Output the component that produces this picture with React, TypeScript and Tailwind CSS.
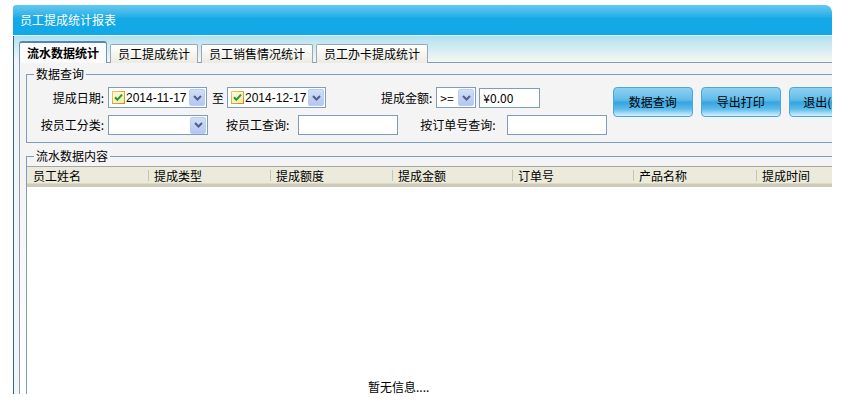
import type { ReactNode } from "react";

const FONT = "font-['SimSun','Noto_Sans_CJK_SC',sans-serif]";

export default function App() {
  return (
    <div
      className={`w-[848px] h-[415px] bg-white pl-[13px] pt-[5px] text-[12px] leading-[14px] text-black whitespace-nowrap ${FONT}`}
    >
      <div className="w-[819px] h-[389px] flex flex-col overflow-x-clip">
        <TitleBar />
        <div className="flex-1 flex flex-col border-l border-[#2d668c] bg-[#f4f4f4] bg-gradient-to-b from-[#b2e1f0] to-[#f6f7f4] bg-[length:100%_26px] bg-no-repeat pl-[5px] pt-[6px]">
          <TabStrip />
          <TabPanel />
        </div>
      </div>
    </div>
  );
}

const TitleBar = () => (
  <div className="h-[31px] shrink-0 flex items-center pl-[7px] rounded-tl-[3px] rounded-tr-[7px] bg-gradient-to-b from-[#62caf1] via-[#15aae6] via-[45%] to-[#12a8e6] border-b border-[#d8f1fa] text-white">
    员工提成统计报表
  </div>
);

const tabs = [
  { label: "流水数据统计", width: "w-[88px]", active: true },
  { label: "员工提成统计", width: "w-[88px]", active: false },
  { label: "员工销售情况统计", width: "w-[112px]", active: false },
  { label: "员工办卡提成统计", width: "w-[112px]", active: false },
];

const TabStrip = () => (
  <div className="h-[21px] shrink-0 flex items-end gap-[3px] relative z-10 -mb-px">
    {tabs.map((tab) =>
      tab.active ? (
        <div
          key={tab.label}
          className={`${tab.width} h-[22px] flex items-center justify-center font-bold rounded-t-[3px] border border-b-0 border-[#6f94b8] border-t-[2px] border-t-[#5187b5] bg-[#fbfbfb]`}
        >
          {tab.label}
        </div>
      ) : (
        <div
          key={tab.label}
          className={`${tab.width} h-[19px] flex items-center justify-center rounded-t-[2px] border border-b-0 border-[#9da7b3] bg-gradient-to-b from-white to-[#ecebe2]`}
        >
          {tab.label}
        </div>
      )
    )}
  </div>
);

const TabPanel = () => (
  <div className="flex-1 flex flex-col border-t border-l border-[#7f9db9] bg-gradient-to-b from-[#f4f4f4] from-[35%] to-white pl-[6px] pt-[4px]">
    <fieldset className="w-[820px] shrink-0 border border-[#7f9db9] pt-[6px] pb-[7px]">
      <legend className="ml-[7px] px-[2px]">数据查询</legend>
      <div className="flex items-start pl-[11px]">
        <div className="flex flex-col gap-[7px] shrink-0">
          <div className="flex items-center h-[21px]">
            <Label>提成日期:</Label>
            <DatePicker value="2014-11-17" className="ml-[4px]" />
            <span className="ml-[5px] shrink-0">至</span>
            <DatePicker value="2014-12-17" className="ml-[3px]" />
            <span className="ml-[55px] shrink-0">提成金额:</span>
            <Select value=">=" className="ml-[4px] w-[40px] h-[21px]" />
            <TextBox value="¥0.00" className="ml-[3px] w-[61px]" />
          </div>
          <div className="flex items-center h-[20px]">
            <Label>按员工分类:</Label>
            <Select value="" className="ml-[4px] w-[100px] h-[20px]" />
            <span className="ml-[18px] shrink-0">按员工查询:</span>
            <TextBox value="" className="ml-[9px] w-[100px]" />
            <span className="ml-[22px] shrink-0">按订单号查询:</span>
            <TextBox value="" className="ml-[11px] w-[100px]" />
          </div>
        </div>
        <div className="flex gap-[8px] ml-[6px] shrink-0">
          <BlueButton>数据查询</BlueButton>
          <BlueButton>导出打印</BlueButton>
          <BlueButton>退出(Esc)</BlueButton>
        </div>
      </div>
    </fieldset>

    <fieldset className="w-[820px] flex-1 flex flex-col border border-b-0 border-[#7f9db9] mt-[6px] pt-[3px]">
      <legend className="ml-[7px] px-[2px]">流水数据内容</legend>
      <GridHeader />
      <div className="flex-1 flex flex-col justify-end bg-white">
        <div className="ml-[341px]">暂无信息....</div>
      </div>
    </fieldset>
  </div>
);

const Label = ({ children }: { children: ReactNode }) => (
  <span className="w-[66px] text-right shrink-0">{children}</span>
);

const columns = [
  { label: "员工姓名", width: "w-[121px]" },
  { label: "提成类型", width: "w-[122px]" },
  { label: "提成额度", width: "w-[122px]" },
  { label: "提成金额", width: "w-[120px]" },
  { label: "订单号", width: "w-[121px]" },
  { label: "产品名称", width: "w-[123px]" },
  { label: "提成时间", width: "w-[121px]" },
];

const GridHeader = () => (
  <div className="h-[21px] shrink-0 flex border-t border-[#a6a6a6] border-b-[3px] border-b-[#cdcab9] bg-[#ebeadb] shadow-[inset_0_-1px_0_#dcd9cb]">
    {columns.map((col, i) => (
      <div key={col.label} className={`${col.width} flex items-center shrink-0`}>
        {i > 0 && <span className="w-px h-[11px] bg-[#c7c4b3] shrink-0" />}
        <span className={i === 0 ? "pl-[6px]" : "pl-[5px]"}>{col.label}</span>
      </div>
    ))}
  </div>
);

const CheckIcon = () => (
  <svg width="13" height="13" viewBox="0 0 13 13" className="shrink-0">
    <defs>
      <linearGradient id="cbBorder" x1="0" y1="0" x2="1" y2="1">
        <stop offset="0" stopColor="#f3c85a" />
        <stop offset="1" stopColor="#c98a1a" />
      </linearGradient>
      <linearGradient id="cbFill" x1="0" y1="0" x2="1" y2="1">
        <stop offset="0" stopColor="#fffbe6" />
        <stop offset="1" stopColor="#f5e7a8" />
      </linearGradient>
    </defs>
    <rect x="0.5" y="0.5" width="12" height="12" fill="url(#cbFill)" stroke="url(#cbBorder)" />
    <path d="M3 6.3 L5.3 8.8 L10 3.6" fill="none" stroke="#1f9e2a" strokeWidth="2" />
  </svg>
);

const DropButton = ({ className = "" }: { className?: string }) => (
  <span
    className={`w-[16px] h-[17px] shrink-0 flex items-center justify-center rounded-[2px] border border-[#bccdf2] bg-gradient-to-b from-[#d2def8] to-[#b3c7f3] ${className}`}
  >
    <svg width="9" height="6" viewBox="0 0 9 6">
      <path d="M1 1 L4.5 4.5 L8 1" fill="none" stroke="#4d6185" strokeWidth="2" />
    </svg>
  </span>
);

const DatePicker = ({ value, className = "" }: { value: string; className?: string }) => (
  <div
    className={`w-[99px] h-[21px] shrink-0 flex items-center border border-[#7f9db9] bg-white ${className}`}
  >
    <span className="ml-[3px] flex">
      <CheckIcon />
    </span>
    <span className="ml-[1px] font-['Liberation_Sans',sans-serif] text-[12px]">{value}</span>
    <DropButton className="ml-auto mr-px" />
  </div>
);

const Select = ({ value, className = "" }: { value: string; className?: string }) => (
  <div className={`shrink-0 flex items-center border border-[#7f9db9] bg-white ${className}`}>
    <span className="pl-[3px]">{value}</span>
    <DropButton className="ml-auto mr-px" />
  </div>
);

const TextBox = ({ value, className = "" }: { value: string; className?: string }) => (
  <div className={`h-[20px] shrink-0 flex items-center border border-[#7f9db9] bg-white pl-[3px] ${className}`}>
    {value}
  </div>
);

const BlueButton = ({ children }: { children: ReactNode }) => (
  <button className="w-[80px] h-[30px] shrink-0 rounded-[4px] border border-[#4aa6dd] bg-[linear-gradient(to_bottom,#8fd1f1_0%,#63bdea_40%,#37a4e1_52%,#5cbbea_75%,#d4f1fd_100%)] text-[12px] leading-[14px] text-black whitespace-nowrap">
    {children}
  </button>
);
